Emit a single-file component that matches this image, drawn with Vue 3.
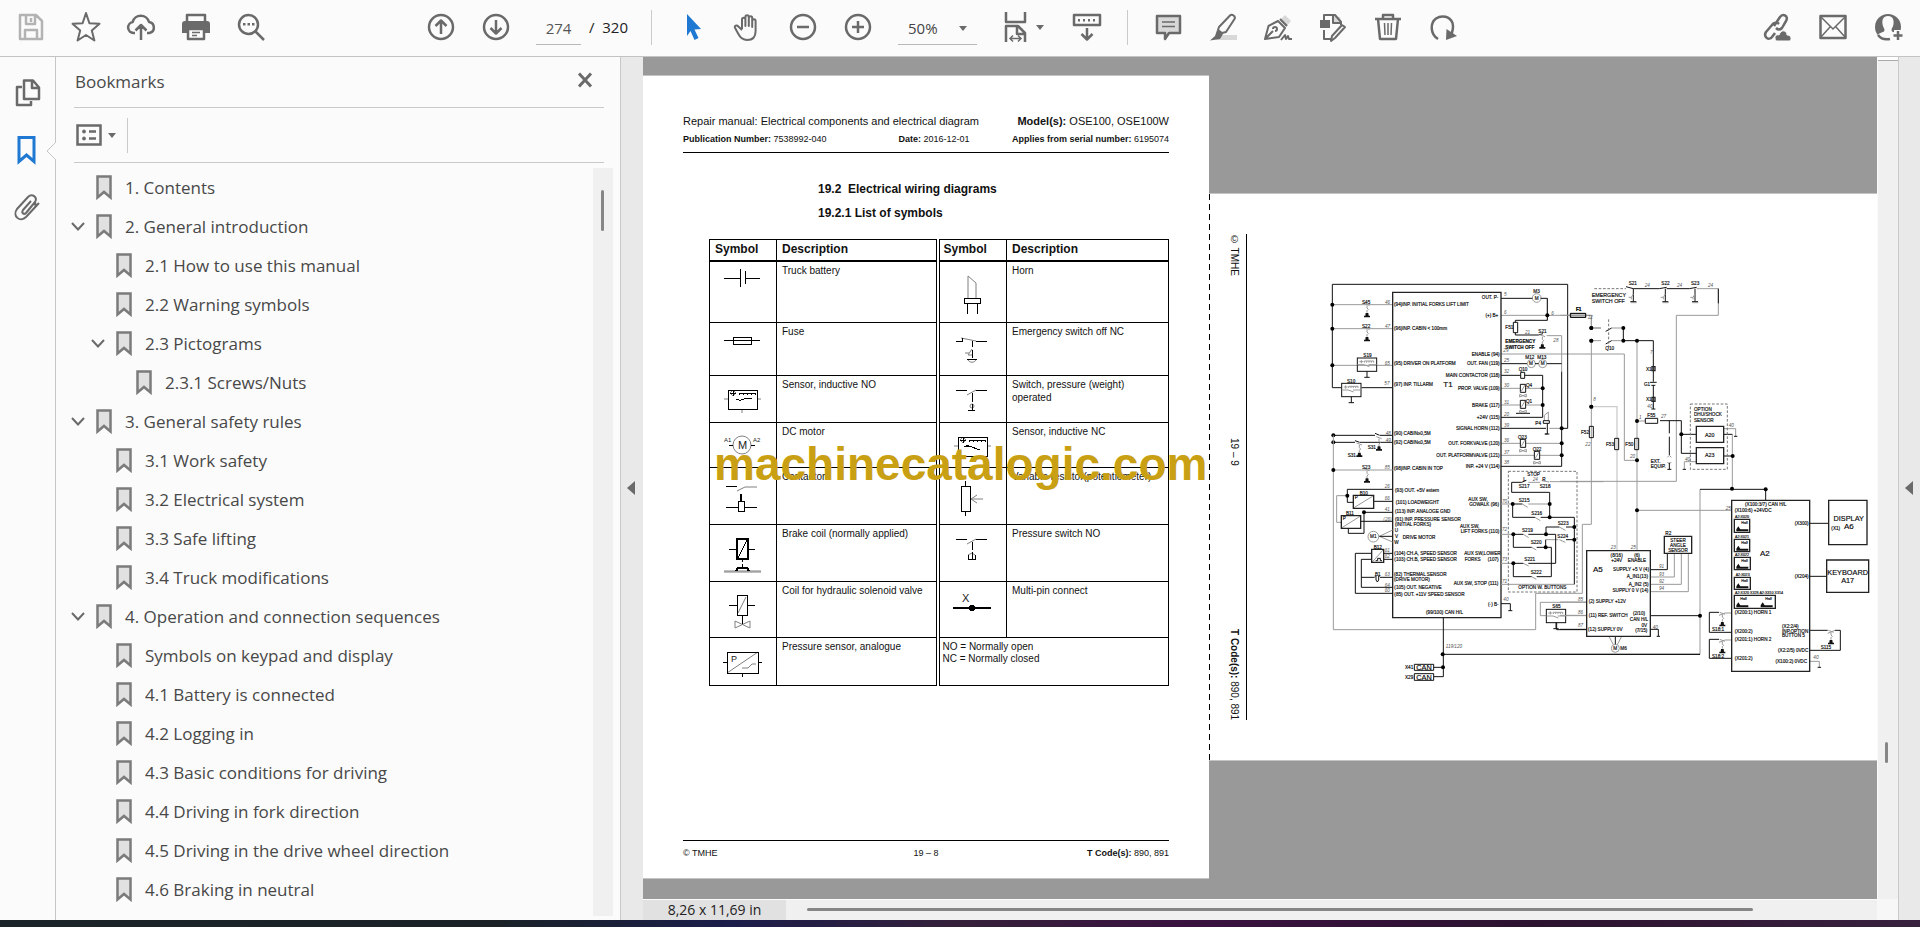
<script setup>
import { ref } from 'vue'

const page = ref('274')
const zoom = ref('50%')

const bookmarks = [
  { level: 1, label: '1. Contents' },
  { level: 1, label: '2. General introduction', open: true },
  { level: 2, label: '2.1 How to use this manual' },
  { level: 2, label: '2.2 Warning symbols' },
  { level: 2, label: '2.3 Pictograms', open: true },
  { level: 3, label: '2.3.1 Screws/Nuts' },
  { level: 1, label: '3. General safety rules', open: true },
  { level: 2, label: '3.1 Work safety' },
  { level: 2, label: '3.2 Electrical system' },
  { level: 2, label: '3.3 Safe lifting' },
  { level: 2, label: '3.4 Truck modifications' },
  { level: 1, label: '4. Operation and connection sequences', open: true },
  { level: 2, label: 'Symbols on keypad and display' },
  { level: 2, label: '4.1 Battery is connected' },
  { level: 2, label: '4.2 Logging in' },
  { level: 2, label: '4.3 Basic conditions for driving' },
  { level: 2, label: '4.4 Driving in fork direction' },
  { level: 2, label: '4.5 Driving in the drive wheel direction' },
  { level: 2, label: '4.6 Braking in neutral' },
]

/* Toolbar icons: s = stroked outline, f = filled shape, l = light fill, t = thin line */
const icons = {
  save: { s: 'M4 3h16l6 6v18H4zM10 3v9h9V3M15 6v4M9 27v-9h12v9', dim: true },
  star: { s: 'M15 1l3.400 10.200 10.100.6-7.700 6.700 2.600 10-8.400-5.500-8.400 5.500 2.600-10L1.500 11.800l10.100-.6z', thin: true },
  cloud: { s: 'M9 21H7.500a5.500 5.500 0 0 1-.9-10.900A8.500 8.500 0 0 1 23 10a5.600 5.600 0 0 1 .5 11H21M15 28V14M9.500 18.500L15 13l5.500 5.500' },
  print: { s: 'M6 9V3h18v6M7 17v10h16V17z', f: 'M4 9h22a3 3 0 0 1 3 3v9h-5v-5H6v5H1v-9a3 3 0 0 1 3-3z', t: 'M11 20.500h8M11 23.500h5' },
  find: { s: 'M12.500 3a9.500 9.500 0 1 1 0 19 9.500 9.500 0 0 1 0-19zM19 19l9 9', f: 'M7 11h2.500v2.500H7zM11.500 11H14v2.500h-2.500zM16 11h2.500v2.500H16z' },
  up: { s: 'M15 3a12 12 0 1 1 0 24 12 12 0 0 1 0-24zM15 22V9M9.500 14L15 8.500 20.500 14' },
  down: { s: 'M15 3a12 12 0 1 1 0 24 12 12 0 0 1 0-24zM15 8v13M9.500 16l5.500 5.500 5.500-5.500' },
  select: { f: 'M9 2l14 15-6.500.5 4 8.500-4 2-4-9L9 24z', blue: true },
  hand: { s: 'M9 17V7.500a1.700 1.700 0 0 1 3.400 0V14V5a1.700 1.700 0 0 1 3.400 0v9V6a1.700 1.700 0 0 1 3.400 0v9V9a1.700 1.700 0 0 1 3.400 0v10c0 6-3 9-8.500 9-5 0-7-2.500-9-6.500l-3-5.500c-1-2 1.500-3.500 3.300-1.500L9 18' },
  minus: { s: 'M15 3a12 12 0 1 1 0 24 12 12 0 0 1 0-24zM9 15h12' },
  plus: { s: 'M15 3a12 12 0 1 1 0 24 12 12 0 0 1 0-24zM9 15h12M15 9v12' },
  fit: { s: 'M5 0v10h19V0M5 30V14h12l7 7v9M16 14v8h8', t: 'M9 26.500h11M12 23.500l-3 3 3 3M17 23.500l3 3-3 3' },
  read: { s: 'M2 3h26v10H2zM15 16v11M9.500 22l5.500 5.500 5.500-5.500', f: 'M6 7h2v2.500H6zM11 7h2v2.500h-2zM16 7h2v2.500h-2zM21 7h2v2.500h-2z' },
  comment: { l: 'M4 4h23v17H17l-5 6v-6H4z', s: 'M4 4h23v17H16l-4 6v-6H4z', t: 'M9 10h13M9 14.500h13' },
  mark: { l: 'M12 23h17v5H8z', s: 'M11 15L22 3.500c2-2 6 1 4.500 3.500L18 20l-4 1-4-3z', f: 'M9 18l6 4-3 5-10 1.500L7 24z', thin: true },
  sign: { l: 'M17 8l5-5 6 6-5 6z', s: 'M2 27l3.500-13L15 9l7 7-6 9zM17 7l7 7M2 27l8-8M10 17a2 2 0 1 1 2 2M18 28l4-5 1 4 2-3 1 3h3', thin: true },
  edit: { l: 'M14 4l8 1 2 6-8 1z', s: 'M6 8V3h11l6 7v3M15 3v8h7M6 18v9h7M27 15l-10 11-4 3 1-5 10-11z', f: 'M2 8h10v8H2z', thin: true },
  trash: { s: 'M2 7h26M10 7V3h10v4M5 7l2 20h16l2-20', t: 'M11.500 11l.5 12M15 11v12M18.500 11L18 23' },
  redo: { s: 'M10 27C2 22 2 11 8 6.500c6-4 14-2 16.500 4.500 1.500 5 0 9-2 13', f: 'M18 28l.5-11L29 24z' },
  link: { s: 'M11 14l6-9c3-4 9-1 6 4l-4 7c-2 2-4 2-6 0M16 12c-2-2-5-2-7 1l-6 7c-3 5 3 9 6 5l3-4', f: 'M13 29c-3-5 1-7 3-6 2-6 8-5 8 0 5 0 5 6 2 6z' },
  mail: { s: 'M2.500 4h25v22h-25z', t: 'M3 5l12 12L27 5M3 25l9-10M27 25l-9-10' },
}
const fileTools = ['save', 'star', 'cloud', 'print', 'find']
const markTools = ['comment', 'mark', 'sign', 'edit', 'trash', 'redo']

/* Legend rows; b = line, g = faint line, k = heavy, t = lettering [x, y, size, text] */
const box = 'M18 14h29v19H18zM29 19v-2h4v2m0-2h4v2m0-2h4v2m0-2h4v2M20 17h6M23 15v5'
const stubs = 'M14 23h4M47 23h4M32 33v4M23 14l3 3-3 3-3-3z'
const rows = [
  { h: 61, a: 'Truck battery', s: { b: 'M14 16h16M35 16h15M30 7v18M35 9v13' }, c: 'Horn', r: { b: 'M24 36h16v5H24zM27 41v11M37 41v11', g: 'M28 36V14l8 7v15' } },
  { h: 53, a: 'Fuse', s: { b: 'M14 17h36M23 14h18v7H23z' }, c: 'Emergency switch off NC', r: { b: 'M16 18h6v-3M36 18h11M32 18v6M32 27v8M27 36h10', g: 'M21 15l15 3M32 26l-4 6h4M28 37c2 3 6 3 8 0M25 30h4' } },
  { h: 47, a: 'Sensor, inductive NO', s: { b: 'M29 25l7-3h6M26 23h3' + box, g: stubs }, c: 'Switch, pressure (weight) operated', r: { b: 'M16 14h11M36 14h11M32 17v9M32 28v6M28 34h7', g: 'M27 19l9-5M30 30a2 2 0 1 0 4 0 2 2 0 1 0-4 0' } },
  { h: 45, a: 'DC motor', s: { g: 'M23 22a9 9 0 1 0 18 0 9 9 0 1 0-18 0', b: 'M19 22h4M41 22h4', t: [[28, 26, 11, 'M'], [14, 19, 6, 'A1'], [43, 19, 6, 'A2']] }, c: 'Sensor, inductive NC', r: { b: 'M26 22l14 5M24 23h5' + box, g: stubs } },
  { h: 57, a: 'Contactor', s: { b: 'M16 18h11M16 39h12M34 39h13M28 33h6v10h-6z', g: 'M27 23l8-4h12', k: 'M31 26v7' }, c: 'Variable resistor(potentiometer)', r: { b: 'M21 18h9v25h-9zM25 13v5M25 43v5', g: 'M30 31h13M37 27l-6 4 6 4' } },
  { h: 57, a: 'Brake coil (normally applied)', s: { b: 'M19 24h8M38 24h7M32 35v2M32 39v4M28 33l9-18', k: 'M27 14h11v20H27zM26 46l2-3h9l2 3', g: 'M14 46h37M14 47h37' }, c: 'Pressure switch NO', r: { b: 'M16 14h11M36 14h11M32 17v8M32 27v7M28 34h7v-4M28 34v-4', g: 'M27 19l9-5M28 30l4-2 3 2' } },
  { h: 56, a: 'Coil for hydraulic solenoid valve', s: { b: 'M27 13h10v20H27zM19 23h8M37 23h8M32 33v9', g: 'M28 31l8-16M25 39v7l15-7v7z' }, c: 'Multi-pin connect', r: { k: 'M13 26h38M30 26a2 2 0 1 0 4 0 2 2 0 1 0-4 0M31 26h3', t: [[22, 20, 11, 'X']] } },
]
const analogue = { b: 'M17 14h31v21H17zM13 24h4M48 24h4M32 35v4', g: 'M17 35l31-21M32 30h6l4-4h4' }

/* Wiring diagram sheets: black and grey wires, lettering as x|y|text|style */
const list = (s) => s.trim().split('\n').map((r) => {
  const [x, y, text, size] = r.trim().split('|')
  return { x: +x, y: +y, text, size }
})
const pts = (s) => s.trim().split(' ').map((p) => p.split(',').map(Number))

const sheets = [
  {
    x: 3, y: -42,
    heavy: 'M548 337H873V1313H548z',
    black: 'M394 623H367V313H1073V745H1055M455 623H548M873 355H967M992 355H1012V421H916V427M916 458V465H985M985 465l14-4M1055 575V859H873M873 551H951M975 551H986M1010 551H1055M873 586H932M944 586H998V712H873M873 745H1008M370 766H495M510 766H548M370 787H435M450 787H548M495 760l14 6M435 782l14 5M932 577h12v18h-12zM910 427h13v31h-13zM1000 722h18v8h-18zM1012 730v32h-8M1006 762h12M918 700h42M1082 401h45v11h-45z',
    grey: 'M367 374H548M367 446H548M367 556H548M873 406H1144V444H1173M1012 355V421M1010 467H1055V575M873 522H1243M873 625H998M873 675H998M873 790H1055M873 826H1055M1003 722V706l12-10v26M1018 745H1055M967 354a13 13 0 1 0 26 0 13 13 0 1 0-26 0M952 551a12 12 0 1 0 24 0 12 12 0 1 0-24 0M986 551a12 12 0 1 0 24 0 12 12 0 1 0-24 0',
    dots: pts('367,374 367,446 367,556 1012,406 1144,444 1144,482 998,625 998,675 1055,745 1055,790 1055,826 370,766 370,787 1144,680'),
    push: pts('471,374 471,446 507,774 448,793 997,468'),
    sensor: pts('471,554 424,630'),
    valve: pts('939,625 939,790 981,826 939,673'),
    start: list(`552|377|(94)INP. INITIAL FORKS LIFT LIMIT
      552|449|(96)INP. CABIN < 100mm
      552|554|(95) DRIVER ON PLATFORM
      552|617|(97) INP. TILLARM
      552|764|(90) CABIN≥0,5M
      552|791|(92) CABIN≤0,5M
      552|870|(98)INP. CABIN IN TOP
      700|621|T1|big
      456|371|S45
      456|443|S22
      460|530|S19
      411|608|S10
      970|338|M3
      974|359|M
      957|556|M
      992|556|M
      946|536|M12
      982|536|M13
      1098|392|F1
      886|446|F51
      985|459|S21
      926|574|Q10
      948|620|Q4
      948|668|Q1
      976|736|P4
      924|776|Q23
      968|812|Q22
      473|807|S31
      413|830|S31
      886|488|EMERGENCY|bold
      886|506|SWITCH OFF|bold`),
    end: list(`865|356|OUT. P-
      865|411|(+) B+
      869|527|ENABLE (94)
      869|554|OUT. FAN (119)
      869|590|MAIN CONTACTOR (118)
      869|629|PROP. VALVE (109)
      869|680|BRAKE (117)
      869|716|+24V (115)
      869|749|SIGNAL HORN (112)
      869|794|OUT. FORKVALVE (120)
      869|830|OUT. PLATFORMVALVE (121)
      869|863|INP. +24 V (114)`),
    mid: [],
    num: list(`525|371|46
      525|443|47
      524|555|65
      523|615|57
      527|764|48
      527|785|49
      882|347|5
      882|401|6
      1024|405|6
      945|461|21
      1030|485|28
      880|515|29
      882|545|25
      882|580|32
      882|622|30
      882|671|31
      882|707|20
      882|740|39
      882|785|36
      882|821|37
      882|853|38`),
  },
  {
    x: 1053, y: 198,
    heavy: 'M409 499h82v48h-82zM409 563h82v48h-82zM276 320h9v12h-9zM276 412h9v12h-9z',
    black: 'M198 80l22 6M220 86H298l22-4M320 86H388l22-4M475 86V130M190 204V242H280V365M270 367h20M274 376h12M280 376V447M274 447h12M300 482H364V580H409M364 523H409M328 482V520M328 530V585M328 608V628M322 628h12M420 688H617V720M31 160h46v12H31zM88 499h12v34H88zM164 535h12v34h-12zM224 535h12v34h-12zM256 475h37v15h-37zM491 523H517M491 588H517M137 214l18-10M137 252l18-10M522 529h10M368 628h10',
    grey: 'M410 86H475V166H349V664H0M0 166H94V204H123M94 242H123M155 204H190M155 242H190M94 242V793H67V1000H-73V1109H-680V526M193 282V601H231M231 242V872M517 523V687M420 688V1183M491 506H527V529M409 605H373V628M231 751H514M231 483H256M322 592l6-6 6 6M322 606l6 6 6-6',
    faint: 'M94 440H171V872',
    dash: 'M103 86H198M146 178V262M391 432H502V628H391z',
    dots: pts('94,204 94,242 190,204 190,242 231,242 94,440 231,483 231,601 231,751 364,523 518,588 516,686 617,688'),
    hook: pts('220,86 316,86 405,86'),
    start: list(`95|111|EMERGENCY|med
      95|129|SWITCH OFF|med
      206|74|S21
      304|74|S22
      393|74|S23
      48|153|F1
      136|269|Q10
      258|332|X1
      258|422|X1
      252|377|G1
      63|521|F52
      138|557|F53
      196|557|F50
      262|470|F55
      272|609|EXT.
      272|623|EQUIP.
      402|452|OPTION
      402|468|DHU/SHOCK
      402|485|SENSOR`),
    end: [],
    mid: list(`449|530|A20|med
      449|590|A23|med`),
    num: list(`254|80|24
      351|80|24
      444|80|24
      83|178|12
      270|283|7
      100|424|8
      262|443|40
      76|559|22
      210|595|20
      303|475|27
      237|477|1
      506|502|40
      375|602|40
      497|749|25`),
  },
  {
    x: 3, y: 768,
    heavy: 'M430 136h61v39h-61zM394 197h58v38h-58zM485 298h36v39h-36z',
    black: 'M548 118H412V157H430M491 154H548M452 214H548M548 187H462V250H415V235M485 310H436V430H548M521 310H548M521 328H548M485 328H454V412H548M454 382H494M510 382H548M494 378h4v12l4 6 4-6v-12h4M497 332h6v-7h8v7h5M508 259H548M935 97H905V127H1019V202M908 162V202H975M992 202H1093V403M908 162H937M910 253V292H965M980 292H1024V380H980M910 253H940M955 253H1008V231H1048M1068 231H1093M1008 253H1037V340H955M1007 292V269M1068 269H1093M910 340H940M910 340V380H965M873 461H901V482M895 482h12M700 503V680H672M672 652H700M698 613H1470M613 643h58v18h-58zM613 671h58v20h-58zM1040 517V539H1129M935 97l14-6',
    grey: 'M370 60H548M412 137H380V217H394M508 259L548 240M508 259L548 276M432 173L489 138M396 233L450 199M487 336L519 300M873 162H908M955 162H1019M873 253H910M873 340H910M873 403H1093M1019 95H1180M955 97H990M995 92l22 4M1007 269H1045M1129 457H991V497H1009M1067 497H1129M474 260a16 16 0 1 0 32 0 16 16 0 1 0-32 0M937 162l16 10M975 202l16 10M940 253l16 10M965 292l14 8M1048 231l18 10M1048 269l18 8M940 340l16 8M965 380l14 8',
    dash: 'M895 64H1101V426H895z',
    dots: pts('370,60 412,137 462,187 908,162 1019,162 1019,202 1093,231 1093,269 910,253 1008,253 1007,292 910,340 698,613 699,652'),
    push: pts('471,60'),
    sensor: pts('1038,498'),
    start: list(`456|56|S23
      449|134|B10
      408|195|B11
      434|148|P
      398|209|P
      480|265|M1
      491|296|B12
      495|377|B1
      555|125|(93) OUT. +5V extern
      557|161|(101) LOADWEIGHT
      555|188|(113) INP. ANALOGE GND
      555|212|(91) INP. PRESSURE SENSOR
      555|227|(INITIAL FORKS)
      554|245|U
      555|263|V
      553|281|W
      578|266|DRIVE MOTOR
      553|314|(104) CH.A, SPEED SENSOR
      553|332|(103) CH.B, SPEED SENSOR
      552|377|(82) THERMAL SENSOR
      552|392|(DRIVE MOTOR)
      553|416|(105) OUT. NEGATIVE
      553|437|(85) OUT. +11V SPEED SENSOR
      648|491|(99/100) CAN H/L
      775|152|AUX SW,
      750|233|AUX SW,
      764|332|FORKS
      952|77|STOP
      940|92|L
      997|92|R
      926|113|S217
      989|113|S218
      926|155|S215
      964|194|S216
      936|245|S219
      962|283|S220
      1043|224|S223
      1042|263|S224
      943|332|S221
      962|371|S222
      925|416|OPTION W. BUTTONS
      1027|473|S65
      585|657|X41
      585|687|X29`),
    end: list(`867|167|GOWALK (96)
      868|248|LIFT FORKS (110)
      872|314|AUX SW,LOWER
      866|332|(107)
      865|404|AUX SW, STOP (111)
      866|467|(-) B-`),
    mid: list(`642|660|CAN|large
      642|689|CAN|large`),
    num: list(`524|57|85
      524|113|26
      524|149|66
      524|182|41
      520|212|(26)
      524|307|61
      524|325|62
      524|378|63
      524|410|64
      524|427|60
      968|94|24
      876|158|70
      876|244|72
      876|333|73
      876|400|71
      880|454|40
      1104|452|85
      1104|491|86
      1104|532|87
      707|595|119/120`),
  },
  {
    x: 1053, y: 858,
    heavy: 'M515 61h234v513H515zM806 61h115v133H806zM800 240h126v97H800zM80 212h191v257H80zM313 169h82v51h-82zM523 118h46v39h-46zM523 178h46v37h-46zM523 232h48v37h-48zM523 292h48v36h-48zM523 346h123v39H523z',
    black: 'M749 130H806M749 289H800M515 457H448V397H477M515 535H448V478H477M749 451H803M749 511H841V451H825M271 269H322V220M271 407H420M271 448H295V468M290 469h10M0 448H80M166 471V493M773 562h10M420 523H0',
    grey: 'M495 399H515M477 406L495 399M495 480H515M477 487L495 480M803 460L825 451M749 544H778V562M271 291H343V220M271 313H364V220M271 335H385V220M0 366H80M0 406H80M148 471L160 494M184 471L172 494M154 505a12 12 0 1 0 24 0 12 12 0 1 0-24 0',
    dots: pts('420,407'),
    push: pts('487,401 487,482 813,455'),
    wedge: pts('529,154 529,212 529,266 529,325 529,382 602,382'),
    start: list(`555|77|(X100:3/7) CAN H/L
      524|95|(X100:6) +24VDC
      525|114|A2:X020|tiny
      525|174|A2:X021|tiny
      525|228|A2:X022|tiny
      527|288|A2:X023|tiny
      525|342|A2:X320 X328 A2:X310 X314|tiny
      544|132|Half|tiny
      544|192|Half|tiny
      544|246|Half|tiny
      544|306|Half|tiny
      541|360|Half|tiny
      616|360|Half|tiny
      600|228|A2|big
      524|401|(X200:1) HORN 1
      524|458|(X200:2)
      524|482|(X201:1) HORN 2
      524|539|(X201:2)
      666|443|(X2:2/4)
      666|458|INP.OPTION
      666|472|BUTTON 5
      456|452|S18:1
      456|533|S18:2
      782|506|S115
      814|149|(X1)
      852|147|A6|big
      99|275|A5|big
      86|368|(2) SUPPLY +12V
      86|411|(11) REF. SWITCH
      84|453|(12) SUPPLY 0V
      316|165|R2
      160|510|M
      181|510|M6`),
    end: list(`746|134|(X300)
      746|293|(X204)
      745|515|(X2:2/5) 0VDC
      741|548|(X100:2) 0VDC
      267|273|SUPPLY +5 V (4)
      264|295|A_IN1(13)
      266|318|A_IN2 (5)
      265|335|SUPPLY 0 V (14)`),
    mid: list(`866|122|DISPLAY|large
      863|284|KEYBOARD|large
      863|309|A17|large
      170|230|(8/16)
      170|245|+24V
      231|230|(6)
      231|245|ENABLE
      237|404|(2/10)
      237|422|CAN H/L
      253|440|0V
      244|455|(7/15)
      354|185|STEER
      354|200|ANGLE
      354|216|SENSOR`),
    num: list(`297|265|91
      297|287|93
      297|308|92
      297|329|94
      152|206|23
      212|206|25
      278|446|40
      760|536|40`),
  },
]
</script>

<template>
  <div class="app">
    <header class="toolbar">
      <div class="group">
        <button v-for="n in fileTools" :key="n" class="tool" :aria-label="n">
          <svg class="icon" :class="{ dim: icons[n].dim, fine: icons[n].thin }" viewBox="0 0 30 30">
            <path v-if="icons[n].s" class="s" :d="icons[n].s" />
            <path v-if="icons[n].f" class="f" :d="icons[n].f" />
            <path v-if="icons[n].t" class="t" :d="icons[n].t" />
          </svg>
        </button>
      </div>
      <div class="group pages-nav">
        <button v-for="n in ['up', 'down']" :key="n" class="tool" :aria-label="n">
          <svg class="icon" viewBox="0 0 30 30"><path class="s" :d="icons[n].s" /></svg>
        </button>
        <input v-model="page" class="page-input" aria-label="Page number" />
        <span class="page-total">/&nbsp; 320</span>
      </div>
      <span class="rule"></span>
      <div class="group view-tools">
        <button v-for="n in ['select', 'hand', 'minus', 'plus']" :key="n" class="tool" :aria-label="n">
          <svg class="icon" :class="{ blue: icons[n].blue, fine: n === 'hand' }" viewBox="0 0 30 30">
            <path v-if="icons[n].s" class="s" :d="icons[n].s" />
            <path v-if="icons[n].f" class="f" :d="icons[n].f" />
          </svg>
        </button>
        <span class="zoom-box">
          <select v-model="zoom" aria-label="Zoom"><option>50%</option><option>100%</option></select>
          <svg class="caret" viewBox="0 0 8 5"><path d="M0 0h8L4 5z" /></svg>
        </span>
        <button class="tool fit" aria-label="Fit width">
          <svg class="icon" viewBox="0 0 30 30"><path class="s" :d="icons.fit.s" /><path class="t" :d="icons.fit.t" /></svg>
          <svg class="caret" viewBox="0 0 8 5"><path d="M0 0h8L4 5z" /></svg>
        </button>
        <button class="tool" aria-label="Read mode">
          <svg class="icon" viewBox="0 0 30 30"><path class="s" :d="icons.read.s" /><path class="f" :d="icons.read.f" /></svg>
        </button>
      </div>
      <span class="rule"></span>
      <div class="group mark-tools">
        <button v-for="n in markTools" :key="n" class="tool" :aria-label="n">
          <svg class="icon" :class="{ fine: icons[n].thin }" viewBox="0 0 30 30">
            <path v-if="icons[n].l" class="l" :d="icons[n].l" />
            <path class="s" :d="icons[n].s" />
            <path v-if="icons[n].f" class="f" :d="icons[n].f" />
            <path v-if="icons[n].t" class="t" :d="icons[n].t" />
          </svg>
        </button>
      </div>
      <div class="group share-tools">
        <button v-for="n in ['link', 'mail']" :key="n" class="tool" :aria-label="n">
          <svg class="icon" viewBox="0 0 30 30">
            <path class="s" :d="icons[n].s" />
            <path v-if="icons[n].f" class="f cut" :d="icons[n].f" />
            <path v-if="icons[n].t" class="t" :d="icons[n].t" />
          </svg>
        </button>
        <button class="tool" aria-label="Account">
          <svg class="icon" viewBox="0 0 30 30">
            <circle cx="15" cy="15" r="13" fill="#6a6a6a" />
            <path fill="#fbfbfb" d="M15 4c5 0 6 4 5.500 8-.3 3-2 4-2 6 0 3 6 2 7 5l-5 5H10l-5-5c1-3 6.500-2 6.500-5 0-2-1.700-3-2-6C9 8 10 4 15 4zM21 18h9v12h-9z" />
            <path class="s" d="M5 23c3 4 7 5 12 4M25 19v9M20.500 23.500h9" />
          </svg>
        </button>
      </div>
    </header>

    <main class="body">
      <nav class="rail">
        <button aria-label="Page thumbnails">
          <svg class="icon" viewBox="0 0 30 30"><path class="s" d="M12 2.500h9l6 7V21H12zM20 3v7h7M10 9H5v18h14v-4" /></svg>
        </button>
        <button class="current" aria-label="Bookmarks">
          <svg class="icon blue" viewBox="0 0 30 30"><path class="s" d="M7 2.500h15v24L14.500 20 7 26.500z" /></svg>
          <svg class="notch" viewBox="0 0 10 18"><path d="M10 0L1 9l9 9" /></svg>
        </button>
        <button aria-label="Attachments">
          <svg class="icon fine" viewBox="0 0 30 30"><path class="s" d="M19 9l-8 9c-2 3 1 5 3 3l9-11c3-5-3-9-7-5L5 17c-5 7 3 14 9 8l13-14M23 10c1 2 1 3 0 5" /></svg>
        </button>
      </nav>

      <aside class="panel">
        <div class="panel-head">
          <h1>Bookmarks</h1>
          <button class="close" aria-label="Close">
            <svg viewBox="0 0 16 16"><path d="M2 1.500l12 13M14 1.500l-12 13" /></svg>
          </button>
        </div>
        <div class="panel-tools">
          <button aria-label="Bookmark options">
            <svg class="options" viewBox="0 0 26 22">
              <rect x="1.500" y="1.500" width="23" height="19" />
              <path d="M13 7.500h7M13 14.500h7" />
              <circle cx="8" cy="7.500" r="1.500" /><circle cx="8" cy="14.500" r="1.500" />
            </svg>
            <svg class="caret" viewBox="0 0 8 5"><path d="M0 0h8L4 5z" /></svg>
          </button>
        </div>
        <div class="tree-wrap">
          <ul class="tree">
            <li v-for="b in bookmarks" :key="b.label" :class="'level-' + b.level">
              <button v-if="b.open" class="twisty" aria-label="Collapse">
                <svg viewBox="0 0 14 9"><path d="M1 1l6 6.500L13 1" /></svg>
              </button>
              <span v-else class="twisty"></span>
              <svg class="flag" viewBox="0 0 16 25"><path d="M1.500 1.500h13v21L8 17l-6.500 5.500z" /></svg>
              <a href="#">{{ b.label }}</a>
            </li>
          </ul>
          <div class="tree-track"><span></span></div>
        </div>
      </aside>

      <button class="splitter" aria-label="Hide panel">
        <svg viewBox="0 0 8 14"><path d="M8 0v14L0 7z" /></svg>
      </button>

      <section class="viewer">
        <div class="canvas">
          <article class="sheet portrait">
            <div class="doc-head">
              <div class="doc-title"><span>Repair manual: Electrical components and electrical diagram</span><span><b>Model(s):</b> OSE100, OSE100W</span></div>
              <div class="doc-sub"><span><b>Publication Number:</b> 7538992-040</span><span class="date"><b>Date:</b> 2016-12-01</span><span class="right"><b>Applies from serial number:</b> 6195074</span></div>
            </div>
            <h2>19.2&nbsp; Electrical wiring diagrams</h2>
            <h2 class="sub">19.2.1 List of symbols</h2>
            <table>
              <colgroup><col class="c1" /><col class="c2" /><col class="c3" /><col class="c4" /></colgroup>
              <thead>
                <tr><th>Symbol</th><th>Description</th><th class="double">Symbol</th><th>Description</th></tr>
              </thead>
              <tbody>
                <tr v-for="r in rows" :key="r.a" :class="'h' + r.h">
                  <td class="sym">
                    <svg viewBox="0 0 66 40">
                      <path v-if="r.s.g" class="g" :d="r.s.g" /><path v-if="r.s.b" class="b" :d="r.s.b" /><path v-if="r.s.k" class="k" :d="r.s.k" />
                      <text v-for="t in r.s.t" :key="t[3]" :x="t[0]" :y="t[1]" :font-size="t[2]">{{ t[3] }}</text>
                    </svg>
                  </td>
                  <td>{{ r.a }}</td>
                  <td class="sym double">
                    <svg viewBox="0 0 66 40">
                      <path v-if="r.r.g" class="g" :d="r.r.g" /><path v-if="r.r.b" class="b" :d="r.r.b" /><path v-if="r.r.k" class="k" :d="r.r.k" />
                      <text v-for="t in r.r.t" :key="t[3]" :x="t[0]" :y="t[1]" :font-size="t[2]">{{ t[3] }}</text>
                    </svg>
                  </td>
                  <td class="narrow">{{ r.c }}</td>
                </tr>
                <tr class="h49">
                  <td class="sym">
                    <svg viewBox="0 0 66 40"><path class="g" :d="analogue.g" /><path class="b" :d="analogue.b" /><text x="21" y="24" font-size="9">P</text></svg>
                  </td>
                  <td>Pressure sensor, analogue</td>
                  <td class="double key" colspan="2">NO = Normally open<br />NC = Normally closed</td>
                </tr>
              </tbody>
            </table>
            <footer class="doc-foot"><span>© TMHE</span><span>19 – 8</span><span class="right"><b>T Code(s):</b> 890, 891</span></footer>
            <div class="watermark">machinecatalogic.com</div>
          </article>

          <article class="sheet landscape">
            <div class="side-foot"><span>© TMHE</span><span>19 – 9</span><span><b>T Code(s):</b> 890, 891</span></div>
            <svg class="wiring" viewBox="0 0 2004 1698" preserveAspectRatio="xMinYMin slice">
              <defs>
                <g id="push"><path class="wg" d="M-8 -4L8 2M0 2v8l4 4-4 4v6" /><path class="wf" d="M-9 38h18v-5h-4l-1-8h-8l-1 8h-4z" /></g>
                <g id="hook"><path class="wb" d="M0 0V38M-9 39H9" /><path class="wg" d="M-14 26h8l6-10M-6 26v6M-8 42h18" /></g>
                <g id="sensor"><rect class="wb" x="-29" y="-20" width="58" height="40" /><path class="wg" d="M-29 0h20l16 6M5 0h24M-8 -6v-5h7v5m0-5h7v5m0-5h7v5m0-5h7v5M-23 -9h12M-17 -14v10" /><path class="wb" d="M0 20v18M-8 38h16" /></g>
                <g id="valve"><path class="wp" d="M-8 -12h16v24H-8z" /><path class="wg" d="M-6 10L6 -10M-10 18v8l20-8v8z" /></g>
                <g id="wedge"><path class="wf" d="M0 0v-6l6-9 6 9h24v6z" /></g>
              </defs>
              <g v-for="(s, i) in sheets" :key="i" :transform="`translate(${s.x} ${s.y})`">
                <path v-if="s.faint" class="wl" :d="s.faint" />
                <path class="wg" :d="s.grey" />
                <path class="wb" :d="s.black" />
                <path class="wh" :d="s.heavy" />
                <path v-if="s.dash" class="wd" :d="s.dash" />
                <circle v-for="(p, k) in s.dots" :key="'d' + k" :cx="p[0]" :cy="p[1]" r="6" />
                <use v-for="(p, k) in s.push" :key="'p' + k" href="#push" :x="p[0]" :y="p[1]" />
                <use v-for="(p, k) in s.hook" :key="'h' + k" href="#hook" :x="p[0]" :y="p[1]" />
                <use v-for="(p, k) in s.sensor" :key="'s' + k" href="#sensor" :x="p[0]" :y="p[1]" />
                <use v-for="(p, k) in s.valve" :key="'v' + k" href="#valve" :x="p[0]" :y="p[1]" />
                <use v-for="(p, k) in s.wedge" :key="'w' + k" href="#wedge" :x="p[0]" :y="p[1]" />
                <text v-for="(t, k) in s.start" :key="'a' + k" :class="t.size" :x="t.x" :y="t.y">{{ t.text }}</text>
                <text v-for="(t, k) in s.end" :key="'e' + k" class="end" :x="t.x" :y="t.y">{{ t.text }}</text>
                <text v-for="(t, k) in s.mid" :key="'m' + k" class="mid" :class="t.size" :x="t.x" :y="t.y">{{ t.text }}</text>
                <text v-for="(t, k) in s.num" :key="'n' + k" class="num" :x="t.x" :y="t.y">{{ t.text }}</text>
              </g>
            </svg>
          </article>
        </div>
        <div class="v-track"><i></i><span></span></div>
        <div class="status">
          <span class="size">8,26 x 11,69 in</span>
          <div class="h-track"><span></span></div>
        </div>
        <div class="corner"></div>
      </section>

      <button class="splitter right-pane" aria-label="Show tools">
        <svg viewBox="0 0 8 14"><path d="M8 0v14L0 7z" /></svg>
      </button>
    </main>
    <div class="taskbar"></div>
  </div>
</template>

<style>
body { margin: 0; overflow: hidden; }
</style>

<style scoped>
.app { height: 100vh; display: flex; flex-direction: column; background: #fbfbfb; color: #444; font-family: "Open Sans", "Noto Sans", sans-serif; }
button { border: 0; padding: 0; background: none; font: inherit; color: inherit; display: flex; align-items: center; justify-content: center; }
.toolbar { flex: none; height: 56px; border-bottom: 1px solid #c3c3c3; display: flex; padding-left: 3px; }
.group { display: flex; align-items: center; height: 54px; }
.tool { width: 55px; height: 54px; flex: none; }
.icon { width: 30px; height: 30px; fill: none; flex: none; overflow: visible; }
.icon .s { stroke: #6a6a6a; stroke-width: 2.5; stroke-linejoin: round; }
.icon .t { stroke: #6a6a6a; stroke-width: 1.5; }
.icon .f { fill: #6a6a6a; }
.icon .cut { stroke: #fbfbfb; stroke-width: 1; }
.icon .l { fill: #d8d8d8; }
.dim .s { stroke: #b3b3b3; }
.fine .s { stroke-width: 2; }
.blue .s { stroke: #1f78d1; stroke-width: 3; stroke-linejoin: miter; }
.blue .f { fill: #1f78d1; }
.caret { width: 8px; height: 5px; fill: #6a6a6a; }
.pages-nav { margin-left: 135px; }
.page-input { width: 45px; height: 32px; margin: 3px 0 0 13px; box-sizing: border-box; border: 0; border-bottom: 1px solid #b8b8b8; background: none; padding: 0; text-align: center; font: 15px "Open Sans", sans-serif; color: #555; }
.page-total { font-size: 15px; color: #222; margin-left: 8px; width: 62px; white-space: nowrap; }
.rule { width: 1px; height: 35px; background: #cacaca; margin-top: 10px; }
.view-tools { margin-left: 13px; }
.zoom-box { width: 79px; height: 32px; margin: 3px 0 0 13px; border-bottom: 1px solid #b8b8b8; display: flex; align-items: center; box-sizing: border-box; }
.zoom-box select { appearance: none; border: 0; background: none; width: 61px; padding: 0 0 0 10px; font: 15px "Open Sans", sans-serif; color: #444; }
.fit { width: 82px; gap: 5px; padding-left: 8px; }
.mark-tools { margin-left: 12px; }
.view-tools { margin-right: 13px; }
.share-tools { margin-left: auto; padding-right: 5px; }

.body { flex: 1; min-height: 0; display: flex; }
.rail { flex: none; width: 55px; border-right: 1px solid #c6c6c6; display: flex; flex-direction: column; padding-top: 7px; }
.rail button { width: 53px; height: 57px; position: relative; }
.notch { position: absolute; right: -3px; top: 21px; width: 10px; height: 18px; fill: #fbfbfb; stroke: #c6c6c6; }
.panel { flex: none; width: 564px; box-sizing: border-box; display: flex; flex-direction: column; padding-left: 18px; }
.panel-head { height: 50px; margin-right: 16px; border-bottom: 1px solid #c9c9c9; display: flex; align-items: center; justify-content: space-between; }
h1 { margin: 0 0 0 1px; font-size: 17px; font-weight: 400; color: #4a4a4a; line-height: 24px; }
.close { width: 38px; height: 46px; align-self: flex-start; }
.close svg { width: 16px; height: 16px; stroke: #6a6a6a; stroke-width: 3; }
.panel-tools { height: 54px; margin-right: 16px; border-bottom: 1px solid #c9c9c9; display: flex; align-items: center; }
.panel-tools button { gap: 6px; height: 35px; padding: 0 11px 0 2px; border-right: 1px solid #cacaca; }
.options { width: 26px; height: 22px; fill: none; stroke: #6a6a6a; stroke-width: 2.5; }
.options circle { fill: #6a6a6a; stroke-width: 1; }
.tree-wrap { flex: 1; min-height: 0; display: flex; margin: 5px 7px 4px -4px; }
.tree { list-style: none; flex: 1; margin: 0; padding: 0; overflow: hidden; }
.tree li { height: 39px; display: flex; align-items: center; }
.level-1 { padding-left: 1px; }
.level-2 { padding-left: 21px; }
.level-3 { padding-left: 41px; }
.twisty { width: 14px; margin: 0 11px 0 0; flex: none; }
.twisty svg { width: 14px; height: 9px; flex: none; fill: none; stroke: #6a6a6a; stroke-width: 2; }
.flag { width: 16px; height: 25px; fill: #e1e1e1; stroke: #7b7b7b; stroke-width: 2.5; flex: none; }
.tree a { color: #484848; text-decoration: none; font-size: 17px; line-height: 24px; margin-left: 13px; white-space: nowrap; }
.tree-track { width: 20px; background: #f0f0f0; }
.tree-track span { display: block; width: 3px; height: 41px; margin: 22px 0 0 8px; border-radius: 2px; background: #868686; }
.splitter { flex: none; width: 23px; box-sizing: border-box; border-left: 1px solid #c9c9c9; background: #e9e9e9; padding: 0 2px 2px 0; }
.splitter svg { width: 8px; height: 14px; fill: #6a6a6a; }
.right-pane { width: 22px; padding-right: 2px; }

.viewer { flex: 1; min-width: 0; display: grid; grid-template-columns: minmax(0, 1fr) 21px; grid-template-rows: minmax(0, 1fr) 21px; }
.canvas { background: #999; display: flex; align-items: center; overflow: hidden; padding-bottom: 2px; }
.sheet { background: #fff; box-sizing: border-box; position: relative; color: #111; font-family: "Liberation Sans", Arial, sans-serif; box-shadow: 0 1px #c4c4c4, 0 -1px #c4c4c4; }
.portrait { flex: none; width: 566px; height: 802px; padding: 36px 40px 12px; display: flex; flex-direction: column; z-index: 1; }
.doc-head { border-bottom: 1px solid #000; padding-bottom: 4px; line-height: 18px; white-space: nowrap; }
.doc-title { display: flex; justify-content: space-between; font-size: 11px; }
.doc-sub { display: grid; grid-template-columns: 1fr auto 1fr; font-size: 9px; }
.date { padding-left: 16px; }
.right { text-align: right; }
h2 { margin: 24px 0 0 135px; font-size: 12px; line-height: 24px; }
h2.sub { margin-top: 0; }
table { margin: 14px 0 0 26px; width: 460px; border-collapse: collapse; table-layout: fixed; font-size: 10px; line-height: 13px; }
.c1 { width: 67px; }
.c2 { width: 161px; }
.c3 { width: 69px; }
th, td { border: 1px solid #000; padding: 2px 5px; text-align: left; vertical-align: top; }
th { font-size: 12px; line-height: 14px; padding: 2px 5px 4px; border-bottom-width: 2px; }
th.double { padding-left: 4px; }
.double { border-left: 4px double #000; }
.narrow { padding-right: 34px; white-space: normal; }
tr:nth-child(5) .narrow { padding-right: 0; white-space: nowrap; }
.key { line-height: 12px; padding: 3px 3px 0; }
.h61 { height: 61px; } .h53 { height: 53px; } .h47 { height: 47px; } .h45 { height: 45px; } .h57 { height: 57px; } .h56 { height: 56px; } .h49 { height: 48px; }
.sym { padding: 0; line-height: 0; }
.sym svg { display: block; width: 66px; height: 40px; overflow: visible; fill: none; shape-rendering: crispEdges; }
.sym .b { stroke: #000; }
.sym .g { stroke: #808080; shape-rendering: auto; }
.sym .k { stroke: #000; stroke-width: 2; }
.sym text { fill: #222; }
.doc-foot { margin-top: auto; border-top: 1px solid #000; display: grid; grid-template-columns: 1fr auto 1fr; font-size: 9px; line-height: 25px; }
.watermark { position: absolute; left: 71px; top: 362px; font-size: 46px; font-weight: 700; line-height: 52px; color: #c9a013; white-space: nowrap; }
.landscape { flex: 1; min-width: 0; height: 566px; display: flex; overflow: hidden; }
.landscape::before { content: ""; width: 1px; background: repeating-linear-gradient(#000 0 6px, #fff 6px 10px); }
.side-foot { flex: none; width: 37px; box-sizing: border-box; margin: 40px 0; border-right: 1px solid #000; padding-right: 6px; writing-mode: vertical-rl; display: flex; justify-content: space-between; font-size: 10px; line-height: 12px; }
.wiring { position: absolute; inset: 0; width: 668px; height: 566px; font-family: "Liberation Sans", Arial, sans-serif; font-size: 14px; fill: #000; }
.wiring text { stroke: #222; stroke-width: 0.5; }
.wiring path, .wiring rect { fill: none; }
.wiring .wb { stroke: #111; stroke-width: 3; }
.wiring .wh { stroke: #222; stroke-width: 4; }
.wiring .wg { stroke: #999; stroke-width: 3; }
.wiring .wl { stroke: #ccc; stroke-width: 4; }
.wiring .wd { stroke: #777; stroke-width: 3; stroke-dasharray: 8 5; }
.wiring .wf { fill: #111; }
.wiring .wp { fill: #fff; stroke: #111; stroke-width: 3; }
.wiring .num { font-style: italic; fill: #555; stroke: none; }
.end { text-anchor: end; }
.mid { text-anchor: middle; }
.big { font-size: 24px; }
.large { font-size: 22px; }
.med { font-size: 16px; }
.tiny { font-size: 11px; }
.bold { font-weight: 700; }

.v-track { background: #f0f0f0; border-left: 1px solid #fbfbfb; box-sizing: border-box; display: flex; flex-direction: column; }
.v-track i { height: 3px; background: #fff; border-bottom: 1px solid #aaa; }
.v-track span { width: 3px; height: 21px; margin: auto 0 136px 7px; border-radius: 2px; background: #868686; }
.status { display: flex; background: #f0f0f0; border-top: 1px solid #fbfbfb; box-sizing: border-box; }
.size { width: 143px; background: #e1e1e1; color: #222; font-size: 14px; line-height: 20px; text-align: center; white-space: nowrap; }
.h-track { flex: 1; display: flex; align-items: center; padding: 0 124px 2px 21px; }
.h-track span { flex: 1; height: 3px; border-radius: 2px; background: #868686; }
.corner { background: #f7f7f7; }
.taskbar { flex: none; height: 7px; background: linear-gradient(90deg, #1b2428 0, #1a2228 26%, #1b1d4a 38%, #35203a 50%, #3a1240 62%, #2c1330 80%, #38213f 100%); }
</style>
